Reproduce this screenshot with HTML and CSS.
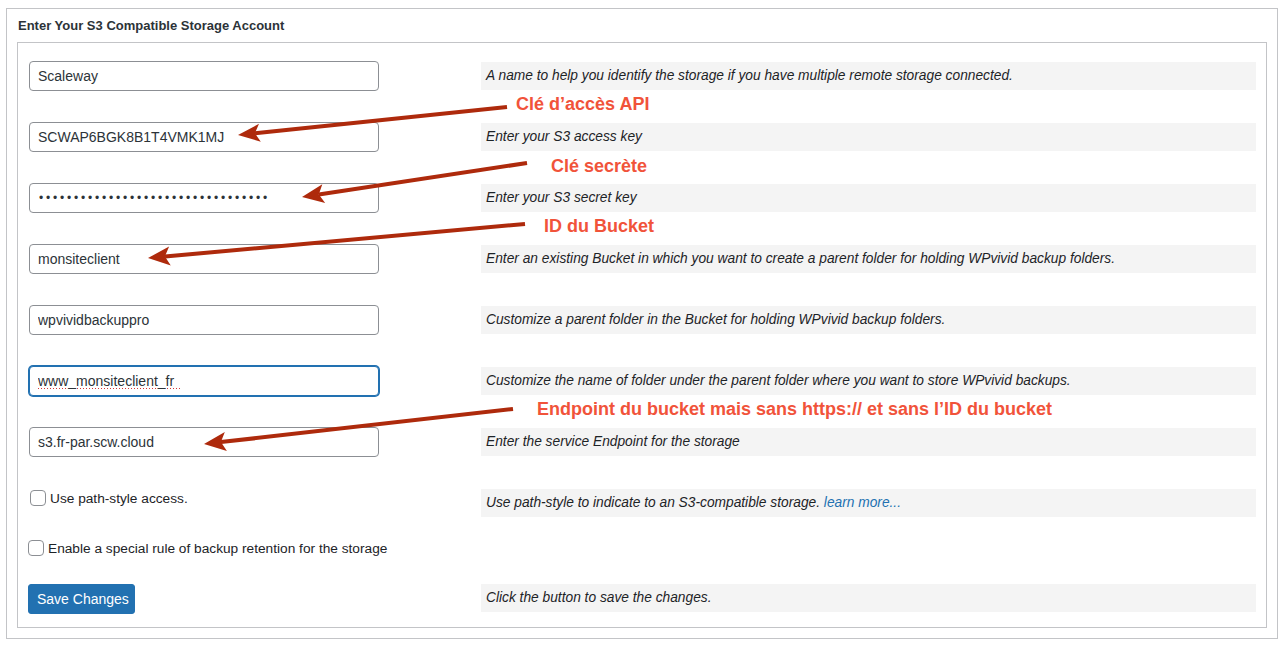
FILE: index.html
```html
<!DOCTYPE html>
<html lang="fr">
<head>
<meta charset="utf-8">
<title>S3 Compatible Storage</title>
<link rel="stylesheet" href="styles.css">
</head>
<body>
<div class="panel">
  <div class="panel-title">Enter Your S3 Compatible Storage Account</div>
  <div class="form-box">
    <div class="row">
      <div class="field"><input class="text-input" type="text" value="Scaleway"></div>
      <div class="desc">A name to help you identify the storage if you have multiple remote storage connected.</div>
    </div>
    <div class="row">
      <div class="field"><input class="text-input" type="text" value="SCWAP6BGK8B1T4VMK1MJ"></div>
      <div class="desc">Enter your S3 access key</div>
    </div>
    <div class="row">
      <div class="field"><input class="text-input password" type="password" value="abcdefghijklmnopqrstuvwxyz0123456"></div>
      <div class="desc">Enter your S3 secret key</div>
    </div>
    <div class="row">
      <div class="field"><input class="text-input" type="text" value="monsiteclient"></div>
      <div class="desc">Enter an existing Bucket in which you want to create a parent folder for holding WPvivid backup folders.</div>
    </div>
    <div class="row">
      <div class="field"><input class="text-input" type="text" value="wpvividbackuppro"></div>
      <div class="desc">Customize a parent folder in the Bucket for holding WPvivid backup folders.</div>
    </div>
    <div class="row">
      <div class="field"><input class="text-input focused" type="text" value="www_monsiteclient_fr" spellcheck="false"></div>
      <div class="desc">Customize the name of folder under the parent folder where you want to store WPvivid backups.</div>
    </div>
    <div class="row">
      <div class="field"><input class="text-input" type="text" value="s3.fr-par.scw.cloud"></div>
      <div class="desc">Enter the service Endpoint for the storage</div>
    </div>
    <div class="row">
      <label class="check check-raised"><input class="box" type="checkbox">Use path-style access.</label>
      <div class="desc">Use path-style to indicate to an S3-compatible storage. <a class="more" href="#">learn more...</a></div>
    </div>
    <div class="row row-short">
      <label class="check check-left"><input class="box" type="checkbox">Enable a special rule of backup retention for the storage</label>
    </div>
    <div class="row row-button">
      <div class="field"><button class="save" type="button">Save Changes</button></div>
      <div class="desc">Click the button to save the changes.</div>
    </div>
  </div>
</div>

<div class="annotations">
  <svg class="arrows" width="1283" height="647" viewBox="0 0 1283 647">
    <g class="arrow">
      <line x1="507" y1="107" x2="255" y2="133.2"/>
      <polygon points="238,135 260.8,141.7 254.9,133.2 259,123.8"/>
    </g>
    <g class="arrow">
      <line x1="527" y1="163" x2="318.8" y2="194.5"/>
      <polygon points="302,197 325.2,203.1 318.8,194.5 322.3,184.3"/>
    </g>
    <g class="arrow">
      <line x1="525" y1="224" x2="165" y2="256.5"/>
      <polygon points="148,258 170.8,265.5 164.9,256.5 169.1,246.6"/>
    </g>
    <g class="arrow">
      <line x1="513" y1="409" x2="220.9" y2="442.1"/>
      <polygon points="204,444 226.9,451 220.9,442.1 224.8,432.1"/>
    </g>
  </svg>
  <div class="note note-1">Clé d’accès API</div>
  <div class="note note-2">Clé secrète</div>
  <div class="note note-3">ID du Bucket</div>
  <div class="note note-4">Endpoint du bucket mais sans https:// et sans l’ID du bucket</div>
</div>
</body>
</html>
```
FILE: styles.css
```css
html, body {
  margin: 0;
  padding: 0;
  background: #ffffff;
}

body {
  font-family: "Liberation Sans", Arial, sans-serif;
  color: #1d2327;
  font-size: 13px;
  width: 1283px;
  height: 647px;
  overflow: hidden;
}

.panel {
  box-sizing: border-box;
  width: 1272px;
  margin: 8px 0 0 6px;
  border: 1px solid #c3c4c7;
  padding: 0 10px 10px 10px;
}

.panel-title {
  height: 33px;
  line-height: 33px;
  padding-left: 1px;
  font-weight: bold;
  font-size: 13px;
  color: #2c3338;
}

.form-box {
  border: 1px solid #c3c4c7;
  padding: 2px 10px 13px 11px;
}

.row {
  display: grid;
  grid-template-columns: 452px 1fr;
  align-items: center;
  height: 61px;
}

.row-short {
  height: 30px;
}

.row-button {
  height: 30px;
  padding-top: 21px;
  align-items: start;
}

.field {
  display: flex;
  align-items: center;
}

.text-input {
  box-sizing: border-box;
  width: 350px;
  height: 30px;
  margin: 0;
  padding: 0 8px;
  border: 1px solid #8c8f94;
  border-radius: 4px;
  background: #ffffff;
  font-family: "Liberation Sans", Arial, sans-serif;
  font-size: 14px;
  color: #2c3338;
  outline: none;
}

.password {
  font-size: 12px;
  letter-spacing: 2.8px;
  padding-left: 9px;
}

.focused {
  border-color: #2271b1;
  box-shadow: 0 0 0 1px #2271b1;
  background-image: repeating-linear-gradient(to right, #d63638 0 1px, transparent 1px 3px);
  background-size: 143px 1px;
  background-repeat: no-repeat;
  background-position: 8px 21px;
}

.desc {
  box-sizing: border-box;
  height: 28px;
  line-height: 28px;
  padding-left: 5px;
  background: #f4f4f4;
  font-style: italic;
  font-size: 13.75px;
  color: #1d2327;
  white-space: nowrap;
  overflow: hidden;
}

.more {
  color: #2271b1;
  text-decoration: none;
}

.check {
  display: flex;
  align-items: center;
  font-size: 13.7px;
  color: #1d2327;
}

.check-raised {
  margin-left: 1px;
  margin-bottom: 9px;
}

.check-left {
  margin-left: -1px;
}

.box {
  appearance: none;
  -webkit-appearance: none;
  box-sizing: border-box;
  width: 16px;
  height: 16px;
  margin: 0 4px 0 0;
  border: 1px solid #8c8f94;
  border-radius: 4px;
  background: #ffffff;
  flex: none;
}

.save {
  box-sizing: border-box;
  width: 107px;
  height: 30px;
  margin-left: -1px;
  padding: 0 8px;
  border: 1px solid #2271b1;
  border-radius: 3px;
  background: #2271b1;
  color: #ffffff;
  font-family: "Liberation Sans", Arial, sans-serif;
  font-size: 14px;
  white-space: nowrap;
  text-align: center;
}

.annotations {
  position: absolute;
  left: 0;
  top: 0;
  width: 1283px;
  height: 647px;
  pointer-events: none;
}

.arrows {
  position: absolute;
  left: 0;
  top: 0;
}

.arrow line {
  stroke: #ae2a0c;
  stroke-width: 4;
  stroke-linecap: butt;
}

.arrow polygon {
  fill: #ae2a0c;
}

.note {
  position: absolute;
  font-family: "Liberation Sans", Arial, sans-serif;
  font-weight: bold;
  font-size: 18px;
  line-height: 18px;
  color: #f1533a;
  white-space: nowrap;
}

.note-1 { left: 516px; top: 95px; }
.note-2 { left: 551px; top: 157px; }
.note-3 { left: 544px; top: 217px; }
.note-4 { left: 537px; top: 400px; }
```
